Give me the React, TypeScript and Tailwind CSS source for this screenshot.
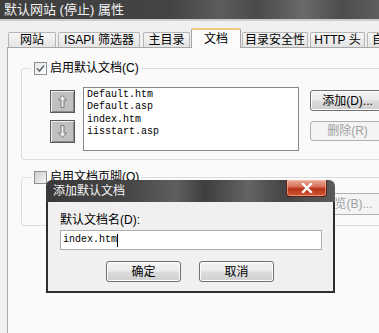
import React from "react";

const tabs = [
  { label: "网站", cls: "w-[48px]", active: false },
  { label: "ISAPI 筛选器", cls: "w-[82px] ml-[2px]", active: false },
  { label: "主目录", cls: "w-[47px] ml-[3px]", active: false },
  { label: "文档", cls: "w-[50px] ml-[1px]", active: true },
  { label: "目录安全性", cls: "w-[66px] ml-[1px]", active: false },
  { label: "HTTP 头", cls: "w-[55px] ml-[2px]", active: false },
  { label: "自定义错误", cls: "w-[70px] ml-[2px]", active: false },
];

const docs = ["Default.htm", "Default.asp", "index.htm", "iisstart.asp"];

const vistaBtn =
  "flex items-center justify-center border border-[#707070] rounded-[3px] bg-[linear-gradient(180deg,#f3f3f3_0%,#ebebeb_48%,#dddddd_52%,#cfcfcf_100%)] shadow-[inset_0_0_0_1px_#fcfcfc]";

const disabledBtn =
  "flex items-center justify-center border border-[#adb2b5] rounded-[3px] bg-[#f4f4f4] text-[#a0a0a0]";

function Checkbox({ checked }: { checked: boolean }) {
  return (
    <span
      className={
        checked
          ? "w-[13px] h-[13px] border border-[#8e8f8f] bg-[linear-gradient(135deg,#e6e6e6,#ffffff)] flex items-center justify-center"
          : "w-[13px] h-[13px] border border-[#8e8f8f] bg-[linear-gradient(135deg,#cfcfcf,#f4f4f4)]"
      }
    >
      {checked && (
        <svg width="11" height="11" viewBox="0 0 11 11">
          <path d="M2 5.5 L4.5 8 L9 2.5" fill="none" stroke="#5a6670" strokeWidth="1.6" />
        </svg>
      )}
    </span>
  );
}

function MoveButton({ up }: { up: boolean }) {
  return (
    <div className="w-[25px] h-[23px] border border-[#5a5a5a] bg-[#c0c0c0] shadow-[inset_1px_1px_0_#ededed,inset_-1px_-1px_0_#8a8a8a] flex items-center justify-center">
      <svg width="9" height="13" viewBox="0 0 9 13">
        <polygon
          points={up ? "4.5,0.5 8.5,5 6,5 6,12.5 3,12.5 3,5 0.5,5" : "4.5,12.5 8.5,8 6,8 6,0.5 3,0.5 3,8 0.5,8"}
          fill="#ececec"
          stroke="#7a7a7a"
          strokeWidth="1"
        />
      </svg>
    </div>
  );
}

export default function App() {
  return (
    <div className="relative w-[379px] h-[333px] overflow-hidden bg-[#f0f0f0] text-[12px] leading-[14px] text-black font-['Liberation_Sans','Noto_Sans_CJK_SC',sans-serif]">
      <div className="h-[19px] flex items-center pl-[4px] text-[13px] text-[#f4f4f4] bg-[linear-gradient(90deg,#3e3e3e_0%,#444444_45%,#5c5c5c_58%,#4a4a4a_68%,#6a6a6a_80%,#4c4c4c_90%,#5e5e5e_100%)]">
        默认网站 (停止) 属性
      </div>
      <div className="h-[2px] bg-[#cdcdcd]" />

      {/* tabs */}
      <div className="flex items-end h-[26px] pl-[8px]">
        {tabs.map((t) =>
          t.active ? (
            <div
              key={t.label}
              className={`${t.cls} h-[20px] -mb-px relative z-10 shrink-0 flex items-center justify-center border border-b-0 border-[#a3a3a3] border-t-2 border-t-[#f3c67a] bg-[#fbfbfb] rounded-t-[2px]`}
            >
              {t.label}
            </div>
          ) : (
            <div
              key={t.label}
              className={`${t.cls} h-[15px] shrink-0 flex items-center justify-center border border-b-0 border-[#b5b5b5] bg-[linear-gradient(180deg,#f6f6f6,#e4e4e4)] rounded-t-[2px] whitespace-nowrap overflow-hidden`}
            >
              {t.label}
            </div>
          )
        )}
      </div>

      {/* panel */}
      <div className="ml-[7px] h-[286px] border-l border-t border-[#a8a8a8] bg-[#fafafa] pl-[13px] pt-[13px]">
        <fieldset className="w-[380px] border border-[#d5dfe5] rounded-[3px] pl-[9px] pt-[12px] pb-[8px]">
          <legend className="flex items-center gap-[3px] pl-[3px] pr-[2px] h-[14px]">
            <Checkbox checked />
            <span>启用默认文档(C)</span>
          </legend>
          <div className="flex ml-[19px]">
            <div className="flex flex-col gap-[7px] pt-[3px]">
              <MoveButton up />
              <MoveButton up={false} />
            </div>
            <div className="ml-[8px] w-[216px] h-[64px] border border-[#828790] bg-white pl-[3px] pt-[1px] font-['Liberation_Mono',monospace] text-[10px] leading-[12.3px]">
              {docs.map((d) => (
                <div key={d}>{d}</div>
              ))}
            </div>
            <div className="ml-[11px] flex flex-col pt-[3px]">
              <div className={`${vistaBtn} w-[75px] h-[21px]`}>添加(D)...</div>
              <div className={`${disabledBtn} w-[75px] h-[20px] mt-[10px]`}>删除(R)</div>
            </div>
          </div>
        </fieldset>

        <fieldset className="mt-[10px] w-[380px] border border-[#d5dfe5] rounded-[3px] pl-[9px] pt-[9px] pb-[10px]">
          <legend className="flex items-center gap-[3px] pl-[3px] pr-[2px] h-[14px]">
            <Checkbox checked={false} />
            <span>启用文档页脚(O)</span>
          </legend>
          <div className="ml-[279px]">
            <div className={`${disabledBtn} w-[75px] h-[22px]`}>浏览(B)...</div>
          </div>
        </fieldset>
      </div>

      {/* dialog */}
      <div className="absolute left-[46px] top-[180px] w-[289px] z-20">
        <div className="relative h-[22px] rounded-t-[6px] flex items-center pl-[7px] text-[#f4f4f4] bg-[linear-gradient(90deg,#3a3a3a_0%,#474747_30%,#5f5f5f_45%,#3e3e3e_55%,#646464_70%,#454545_82%,#5a5a5a_100%)]">
          添加默认文档
          <div className="absolute right-[8px] top-0 w-[41px] h-[17px] rounded-b-[4px] border border-t-0 border-[#5b2418] bg-[linear-gradient(180deg,#e9ab9a_0%,#d8745a_40%,#b83218_55%,#d05a36_100%)] shadow-[inset_0_0_0_1px_rgba(255,200,180,0.5)] flex items-center justify-center">
            <svg width="12" height="10" viewBox="0 0 12 10">
              <path d="M2 1 L10 9 M10 1 L2 9" stroke="#ffffff" strokeWidth="2.4" strokeLinecap="square" />
            </svg>
          </div>
        </div>
        <div className="border-x-2 border-b-2 border-[#2e2e2e] bg-[#f0f0f0] pl-[12px] pt-[11px] pb-[9px]">
          <div>默认文档名(D):</div>
          <div className="mt-[3px] w-[262px] h-[20px] border border-[#abadb3] bg-white flex items-center pl-[2px] font-['Liberation_Mono',monospace] text-[10px]">
            index.htm
            <span className="w-px h-[13px] bg-black" />
          </div>
          <div className="mt-[11px] flex gap-[18px] pl-[46px]">
            <div className={`${vistaBtn} w-[75px] h-[21px]`}>确定</div>
            <div className={`${vistaBtn} w-[75px] h-[21px]`}>取消</div>
          </div>
        </div>
      </div>
    </div>
  );
}
